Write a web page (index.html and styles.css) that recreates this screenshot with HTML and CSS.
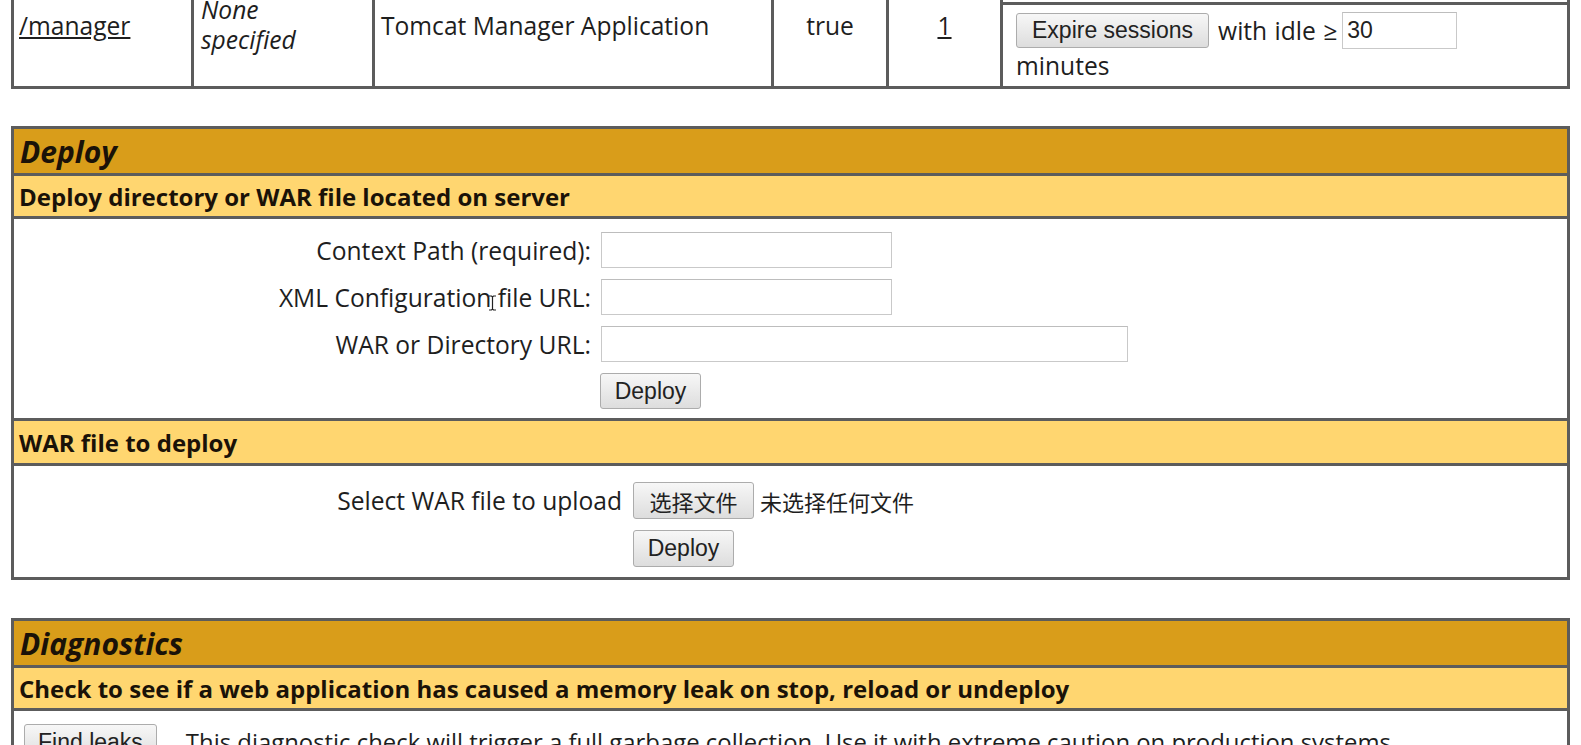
FILE: index.html
```html
<!DOCTYPE html>
<html lang="en">
<head>
<meta charset="utf-8">
<title>Tomcat Web Application Manager</title>
<link rel="stylesheet" href="styles.css">
</head>
<body>
<div class="page">
  <div class="apps">
    <div class="cell path rs"><a href="#" class="lnk">/manager</a></div>
    <div class="cell ver rs"><em>None<br>specified</em></div>
    <div class="cell name rs">Tomcat Manager Application</div>
    <div class="cell run rs">true</div>
    <div class="cell sess rs"><a href="#" class="lnk">1</a></div>
    <div class="cell cmd1"></div>
    <div class="cell cmd2">
      <div class="expire-line"><button class="btn">Expire sessions</button><span class="idle">with idle ≥</span><input class="txt idle-in" type="text" value="30"></div>
      <div class="minutes">minutes</div>
    </div>
  </div>

  <div class="section">
    <div class="title">Deploy</div>
    <div class="subhead">Deploy directory or WAR file located on server</div>
    <div class="form-area deploy-form">
      <label class="lbl">Context Path (required):</label>
      <input class="txt w-short" type="text">
      <label class="lbl">XML Configuration file URL:</label>
      <input class="txt w-short" type="text">
      <label class="lbl">WAR or Directory URL:</label>
      <input class="txt w-long" type="text">
      <span></span>
      <button class="btn">Deploy</button>
      <svg class="ibeam" width="9" height="16" viewBox="0 0 9 16"><path d="M1 1h2.5l1 1 1-1H8M4.5 2v12M1 15h2.5l1-1 1 1H8" fill="none" stroke="#222" stroke-width="1.2"/></svg>
    </div>
    <div class="subhead">WAR file to deploy</div>
    <div class="form-area war-form">
      <label class="lbl">Select WAR file to upload</label>
      <div class="file-pick"><button class="btn cjk">选择文件</button><span class="cjk-txt">未选择任何文件</span></div>
      <span></span>
      <button class="btn">Deploy</button>
    </div>
  </div>

  <div class="section diag">
    <div class="title">Diagnostics</div>
    <div class="subhead">Check to see if a web application has caused a memory leak on stop, reload or undeploy</div>
    <div class="diag-row">
      <button class="btn">Find leaks</button>
      <span class="diag-txt">This diagnostic check will trigger a full garbage collection. Use it with extreme caution on production systems.</span>
    </div>
  </div>
</div>
</body>
</html>
```

FILE: styles.css
```css
* { box-sizing: border-box; }
html, body { margin: 0; background: #fff; }
body {
  font-family: "Open Sans", "Noto Sans CJK SC", sans-serif;
  font-size: 24.6px;
  color: #1e1e1e;
  height: 745px;
  overflow: hidden;
}
.page { padding: 0 11px; }

.btn {
  font-family: "Liberation Sans", Arial, "Noto Sans CJK SC", sans-serif;
  font-size: 23px;
  color: #222;
  height: 36px;
  padding: 0 13px;
  border: 1px solid #acacac;
  border-radius: 3px;
  background: linear-gradient(#f7f7f7, #dddddd);
  margin: 0;
  line-height: 1;
}
.btn.cjk { font-family: "Noto Sans CJK SC", sans-serif; height: 37px; font-size: 22px; padding: 0 14px; }
.txt {
  height: 37px;
  border: 1px solid #c9c9c9;
  border-top-color: #bdbdbd;
  background: #fff;
  font-family: "Liberation Sans", Arial, sans-serif;
  font-size: 23px;
  color: #222;
  padding: 0 4px;
  margin: 0;
}
.lnk { color: #1e1e1e; text-decoration: underline; }

/* application list */
.apps {
  display: grid;
  grid-template-columns: 177px 178px 396px 112px 111px 1fr;
  grid-template-rows: 38px 81px;
  gap: 3px;
  padding: 3px;
  background: #5c5c5c;
  margin-top: -39px;
}
.cell { background: #fff; display: flex; align-items: center; }
.rs { grid-row: span 2; }
.path { padding-left: 5px; }
.ver { padding-left: 7px; line-height: 30px; }
.name { padding-left: 6px; }
.run, .sess { justify-content: center; }
.cmd2 { flex-direction: column; align-items: flex-start; justify-content: flex-start; padding: 7px 13px 0; }
.expire-line { display: flex; align-items: center; height: 37px; }
.expire-line .btn { height: 35px; padding: 0 15px; }
.idle { margin: 0 5px 0 9px; word-spacing: 1px; }
.idle-in { width: 115px; }
.minutes { line-height: 34px; }

/* sections */
.section {
  margin-top: 37px;
  background: #5c5c5c;
  padding: 3px;
  display: flex;
  flex-direction: column;
  gap: 3px;
}
.section.diag { margin-top: 38px; }
.title {
  background: #d99d1a;
  height: 44px;
  display: flex;
  align-items: center;
  padding-left: 6px;
  font-weight: bold;
  font-style: italic;
  font-size: 30px;
  color: #1a1208;
}
.subhead {
  background: #ffd670;
  height: 40px;
  display: flex;
  align-items: center;
  padding-left: 5px;
  font-weight: bold;
  font-size: 24px;
  color: #1a1208;
}
.subhead + .form-area + .subhead { height: 42px; }
.form-area {
  background: #fff;
  display: grid;
  align-content: start;
  align-items: center;
  justify-items: start;
  position: relative;
}
.lbl { justify-self: end; white-space: nowrap; }
.deploy-form {
  height: 199px;
  padding-top: 13px;
  grid-template-columns: 577px auto;
  grid-auto-rows: 36px;
  column-gap: 10px;
  row-gap: 11px;
}
.deploy-form .txt { height: 36px; }
.w-short { width: 291px; }
.w-long { width: 527px; }
.deploy-form .btn { margin-left: -1px; width: 101px; }
.war-form {
  height: 111px;
  padding-top: 16px;
  grid-template-columns: 608px auto;
  grid-auto-rows: 37px;
  column-gap: 11px;
  row-gap: 11px;
}
.war-form .btn { width: 101px; height: 37px; }
.war-form .btn.cjk { width: 121px; }
.file-pick { display: flex; align-items: center; gap: 6px; }
.cjk-txt { font-family: "Noto Sans CJK SC", sans-serif; font-size: 22px; }
.ibeam { position: absolute; left: 474px; top: 76px; }

.diag-row {
  background: #fff;
  height: 60px;
  display: flex;
  align-items: flex-start;
  padding: 13px 0 0 10px;
  gap: 29px;
}
.diag-row .btn { height: 36px; }
.diag-txt { font-size: 23.9px; line-height: 30px; padding-top: 3px; white-space: nowrap; }
```
